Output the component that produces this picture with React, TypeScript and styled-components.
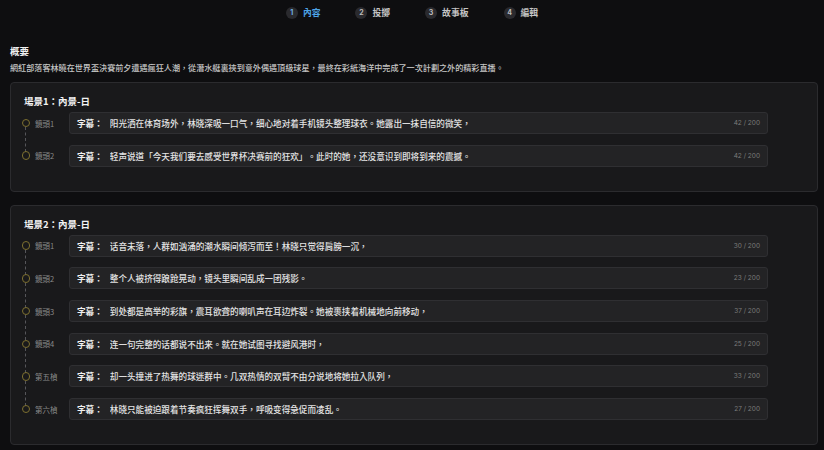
import styled, { createGlobalStyle } from "styled-components";

const GlobalStyle = createGlobalStyle`
  html, body {
    margin: 0;
    padding: 0;
    background: #0e0e10;
  }
  body {
    font-family: "Noto Sans CJK TC", "Noto Sans CJK SC", "Noto Sans", sans-serif;
    color: #e6e6e6;
  }
`;

// start of styled-components
const Page = styled.div`
  width: 824px;
  height: 450px;
  overflow: hidden;
  background: #0e0e10;
  padding: 0 6px 0 10px;
  box-sizing: border-box;
`;
const Stepper = styled.div`
  height: 25px;
  display: flex;
  justify-content: center;
  align-items: center;
  gap: 35px;
  margin: 0 -6px 0 -10px;
`;
const Step = styled.div`
  display: flex;
  align-items: center;
  gap: 5px;
`;
const StepNum = styled.div<{ $active: boolean }>`
  width: 12px;
  height: 12px;
  border-radius: 50%;
  background: #2a2a2e;
  color: ${(p) => (p.$active ? "#6fb2e6" : "#bdbdbd")};
  font-family: "Inter", "Noto Sans", sans-serif;
  font-size: 7px;
  font-weight: 700;
  display: flex;
  justify-content: center;
  align-items: center;
`;
const StepLabel = styled.div<{ $active: boolean }>`
  font-size: 8.8px;
  font-weight: 700;
  color: ${(p) => (p.$active ? "#4da3e6" : "#c4c4c4")};
`;
const SummaryTitle = styled.div`
  margin-top: 19px;
  font-size: 9.5px;
  font-weight: 700;
  line-height: 14px;
  color: #f0f0f0;
`;
const SummaryText = styled.div`
  margin-top: 3px;
  font-size: 8.1px;
  font-weight: 500;
  line-height: 14px;
  color: #c6c6c6;
`;
const Card = styled.div`
  margin-top: 7px;
  background: #19191b;
  border: 1px solid #2b2b2e;
  border-radius: 4px;
  padding: 11px 0 24px 13px;
  box-sizing: border-box;
  & + & {
    margin-top: 13px;
  }
`;
const CardTitle = styled.div`
  font-size: 9.5px;
  font-weight: 700;
  line-height: 14px;
  color: #f2f2f2;
  margin-bottom: 4px;
`;
const Rows = styled.div`
  display: flex;
  flex-direction: column;
  gap: 10.7px;
`;
const Row = styled.div`
  display: flex;
  align-items: center;
`;
const Marker = styled.div<{ $last: boolean }>`
  width: 6.5px;
  height: 6.5px;
  border: 1.2px solid #7d7030;
  border-radius: 50%;
  margin-left: -2.5px;
  flex-shrink: 0;
  position: relative;
  &::after {
    content: "";
    display: ${(p) => (p.$last ? "none" : "block")};
    position: absolute;
    left: 2.7px;
    top: 7.5px;
    height: 25px;
    border-left: 1px dashed #56565a;
  }
`;
const ShotLabel = styled.div`
  width: 34px;
  margin-left: 5px;
  font-size: 7.5px;
  color: #8a8a8a;
  flex-shrink: 0;
`;
const CaptionBox = styled.div`
  width: 699px;
  height: 22px;
  box-sizing: border-box;
  background: #232325;
  border: 1px solid #2f2f32;
  border-radius: 3px;
  display: flex;
  align-items: center;
  padding: 0 7px;
`;
const CaptionKey = styled.span`
  font-size: 8.6px;
  font-weight: 700;
  color: #f0f0f0;
  margin-right: 7px;
  white-space: nowrap;
`;
const CaptionText = styled.span`
  flex: 1;
  font-size: 8.6px;
  font-weight: 500;
  color: #e4e4e4;
  white-space: nowrap;
  overflow: hidden;
`;
const Counter = styled.span`
  font-family: "Inter", "Noto Sans", sans-serif;
  font-size: 6.5px;
  color: #7b7b7b;
  margin-left: 8px;
`;
// end of styled components

type Shot = { label: string; text: string; count: number };

const steps = ["內容", "投擲", "故事板", "編輯"];

const scenes: { title: string; shots: Shot[] }[] = [
  {
    title: "場景1：內景-日",
    shots: [
      {
        label: "鏡頭1",
        text: "阳光洒在体育场外，林晓深吸一口气，细心地对着手机镜头整理球衣。她露出一抹自信的微笑，",
        count: 42,
      },
      {
        label: "鏡頭2",
        text: "轻声说道「今天我们要去感受世界杯决赛前的狂欢」。此时的她，还没意识到即将到来的震撼。",
        count: 42,
      },
    ],
  },
  {
    title: "場景2：內景-日",
    shots: [
      { label: "鏡頭1", text: "话音未落，人群如汹涌的潮水瞬间倾泻而至！林晓只觉得肩膀一沉，", count: 30 },
      { label: "鏡頭2", text: "整个人被挤得踉跄晃动，镜头里瞬间乱成一团残影。", count: 23 },
      { label: "鏡頭3", text: "到处都是高举的彩旗，震耳欲聋的喇叭声在耳边炸裂。她被裹挟着机械地向前移动，", count: 37 },
      { label: "鏡頭4", text: "连一句完整的话都说不出来。就在她试图寻找避风港时，", count: 25 },
      { label: "第五楨", text: "却一头撞进了热舞的球迷群中。几双热情的双臂不由分说地将她拉入队列，", count: 33 },
      { label: "第六楨", text: "林晓只能被迫跟着节奏疯狂挥舞双手，呼吸变得急促而凌乱。", count: 27 },
    ],
  },
];

function App() {
  return (
    <Page>
      <GlobalStyle />
      <Stepper>
        {steps.map((s, i) => (
          <Step key={s}>
            <StepNum $active={i === 0}>{i + 1}</StepNum>
            <StepLabel $active={i === 0}>{s}</StepLabel>
          </Step>
        ))}
      </Stepper>
      <SummaryTitle>概要</SummaryTitle>
      <SummaryText>
        網紅部落客林曉在世界盃決賽前夕遭遇瘋狂人潮，從潛水艇裏挾到意外偶遇頂級球星，最終在彩紙海洋中完成了一次計劃之外的精彩直播。
      </SummaryText>
      {scenes.map((scene) => (
        <Card key={scene.title}>
          <CardTitle>{scene.title}</CardTitle>
          <Rows>
            {scene.shots.map((shot, i) => (
              <Row key={i}>
                <Marker $last={i === scene.shots.length - 1} />
                <ShotLabel>{shot.label}</ShotLabel>
                <CaptionBox>
                  <CaptionKey>字幕：</CaptionKey>
                  <CaptionText>{shot.text}</CaptionText>
                  <Counter>{shot.count} / 200</Counter>
                </CaptionBox>
              </Row>
            ))}
          </Rows>
        </Card>
      ))}
    </Page>
  );
}

export default App;
